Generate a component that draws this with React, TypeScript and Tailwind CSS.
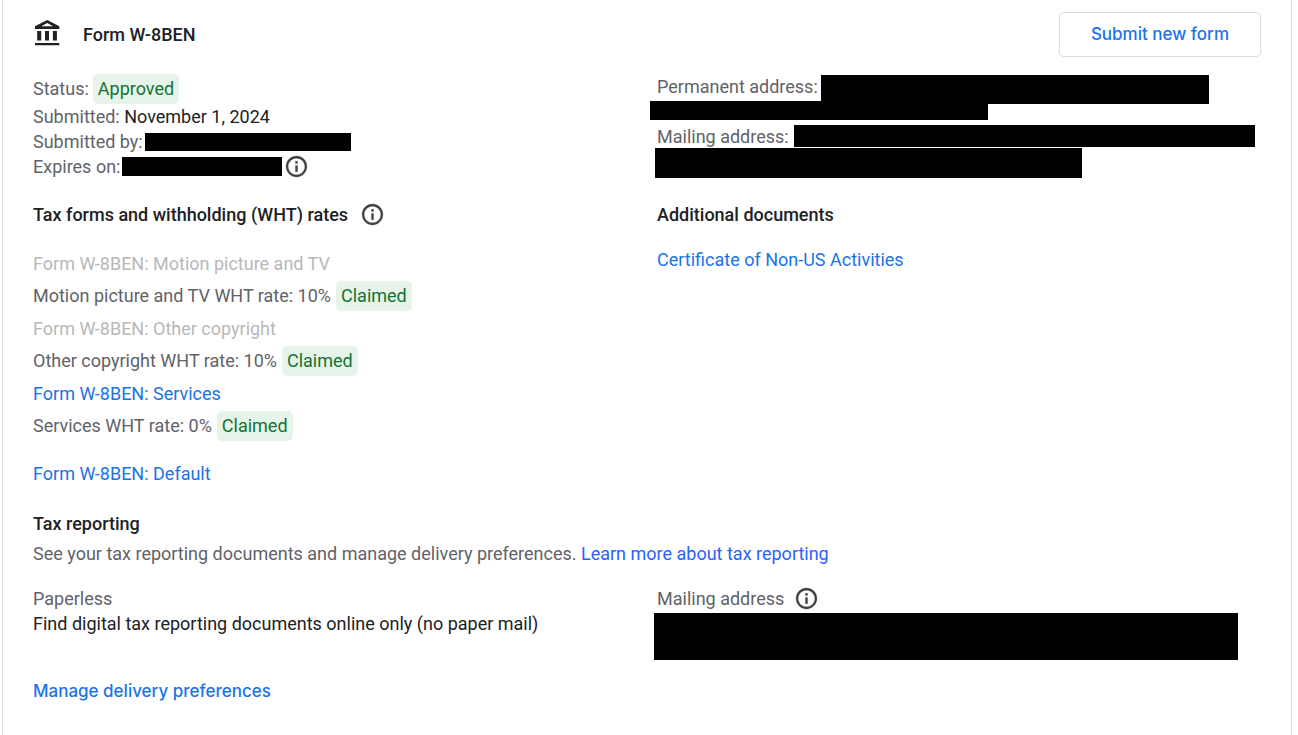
import type { ReactNode } from 'react';

function BankIcon() {
  return (
    <svg viewBox="0 0 31 31" className="size-[31px] fill-[#202124]" aria-hidden="true">
      <path
        fillRule="evenodd"
        d="M14.2 .9 2 7.3V10h24.3V7.3zM14.2 3.9 20.1 7.3H8.3zM4.2 12h4v9.5h-4zM12 12h4v9.5h-4zM19.9 12h4v9.5h-4zM2 24h24.3v2.2H2z"
      />
    </svg>
  );
}

function InfoButton({ label }: { label: string }) {
  return (
    <button type="button" aria-label={label} className="shrink-0">
      <svg
        viewBox="0 0 24 24"
        className="size-[25px] fill-[#3c4043] stroke-[#3c4043] stroke-[0.3]"
        aria-hidden="true"
      >
        <path d="M11 7h2v2h-2zm0 4h2v6h-2zm1-9C6.48 2 2 6.48 2 12s4.48 10 10 10 10-4.48 10-10S17.52 2 12 2zm0 18c-4.41 0-8-3.59-8-8s3.59-8 8-8 8 3.59 8 8-3.59 8-8 8z" />
      </svg>
    </button>
  );
}

function Badge({ children }: { children: ReactNode }) {
  return <span className="rounded-[5px] bg-[#e6f4ea] px-[5px] text-[#137333]">{children}</span>;
}

function Rate({ children }: { children: ReactNode }) {
  return (
    <p className="flex gap-[5px] leading-[30px]">
      <span>{children}</span>
      <Badge>Claimed</Badge>
    </p>
  );
}

export default function App() {
  return (
    <main className="ml-0.5 mr-1.5 min-h-screen border-x border-[#dadce0] bg-white pb-8 pl-[30px] pt-3 font-['Roboto',sans-serif] text-[18px] leading-[25px] text-[#5f6368]">
      <header className="flex items-center justify-between pr-[30px]">
        <div className="flex items-center gap-[19px]">
          <BankIcon />
          <h1 className="font-medium text-[#202124]">Form W-8BEN</h1>
        </div>
        <button
          type="button"
          className="h-[45px] rounded-[5px] border border-[#dadce0] px-[31px] font-['Inter',sans-serif] text-[17px] font-medium text-[#1a73e8]"
        >
          Submit new form
        </button>
      </header>

      <section className="mt-[17px] grid grid-cols-2 pr-[10px]">
        <div>
          <p className="flex gap-1 leading-[30px]">
            <span>Status:</span>
            <Badge>Approved</Badge>
          </p>
          <p>
            Submitted: <span className="text-[#202124]">November 1, 2024</span>
          </p>
          <p className="flex items-center gap-0.5">
            <span>Submitted by:</span>
            <span className="h-[18px] w-[206px] bg-black" />
          </p>
          <p className="flex h-[25px] items-center gap-0.5">
            <span>Expires on:</span>
            <span className="h-[19px] w-[160px] bg-black" />
            <InfoButton label="About the expiration date" />
          </p>
        </div>
        <div>
          <p className="flex h-[27px] items-start gap-[3px]">
            <span>Permanent address:</span>
            <span className="mt-px h-[29px] w-[388px] bg-black" />
          </p>
          <div className="-ml-[7px] h-[19px] w-[338px] bg-black" />
          <p className="mt-1 flex h-6 items-start gap-[5px]">
            <span>Mailing address:</span>
            <span className="mt-px h-[22px] w-[461px] bg-black" />
          </p>
          <div className="-ml-0.5 h-[30px] w-[427px] bg-black" />
        </div>
      </section>

      <section className="mt-[23px] grid grid-cols-2 pr-[10px]">
        <div>
          <div className="flex h-[25px] items-center gap-3">
            <h2 className="font-medium text-[#202124]">Tax forms and withholding (WHT) rates</h2>
            <InfoButton label="About withholding rates" />
          </div>
          <div className="mt-6 flex flex-col gap-[5px]">
            <p className="text-[#b8b8b8]">Form W-8BEN: Motion picture and TV</p>
            <Rate>Motion picture and TV WHT rate: 10%</Rate>
            <p className="text-[#b8b8b8]">Form W-8BEN: Other copyright</p>
            <Rate>Other copyright WHT rate: 10%</Rate>
            <a href="#services" className="self-start text-[#1a73e8]">
              Form W-8BEN: Services
            </a>
            <Rate>Services WHT rate: 0%</Rate>
          </div>
          <a href="#default" className="mt-5 inline-block text-[#1a73e8]">
            Form W-8BEN: Default
          </a>
        </div>
        <div>
          <h2 className="font-medium text-[#202124]">Additional documents</h2>
          <a href="#certificate" className="mt-5 inline-block text-[#1a73e8]">
            Certificate of Non-US Activities
          </a>
        </div>
      </section>

      <section className="mt-[25px]">
        <h2 className="font-medium text-[#202124]">Tax reporting</h2>
        <p className="mt-[5px]">
          See your tax reporting documents and manage delivery preferences.{' '}
          <a href="#learn-more" className="text-[#2962ff]">
            Learn more about tax reporting
          </a>
        </p>
        <div className="mt-5 grid grid-cols-2 pr-[10px]">
          <div>
            <p>Paperless</p>
            <p className="text-[#202124]">Find digital tax reporting documents online only (no paper mail)</p>
          </div>
          <div>
            <div className="flex h-[25px] items-center gap-2.5">
              <span>Mailing address</span>
              <InfoButton label="About the mailing address" />
            </div>
            <div className="-ml-[3px] mt-0.5 h-[47px] w-[584px] bg-black" />
          </div>
        </div>
        <button type="button" className="mt-[19px] font-['Inter',sans-serif] text-[17px] font-medium text-[#1a73e8]">
          Manage delivery preferences
        </button>
      </section>
    </main>
  );
}
